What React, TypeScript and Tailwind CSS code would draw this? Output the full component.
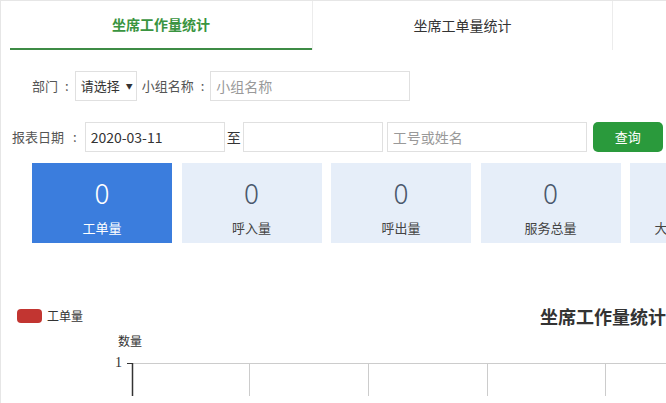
import React from 'react';

const font = { fontFamily: '"Noto Sans CJK SC", "Noto Sans", sans-serif' };

const inputCls = "h-[30px] border border-[#e0e0e0] bg-white px-[5px] text-[14px] text-[#333] outline-none placeholder:text-[#999]";

const stats = [
  { value: 0, label: '工单量', active: true },
  { value: 0, label: '呼入量' },
  { value: 0, label: '呼出量' },
  { value: 0, label: '服务总量' },
  { value: 0, label: '大厅服务工单量' },
];

export default function App() {
  return (
    <div className="relative h-[403px] w-[666px] overflow-hidden bg-white border-t border-l border-[#e6e6e6]" style={font}>
      {/* tabs */}
      <div className="flex pl-[9px] h-[49px]">
        <div className="flex w-[302px] shrink-0 items-center justify-center border-b-[2px] border-[#3d8b45] text-[14px] font-bold text-[#3a9440]">
          坐席工作量统计
        </div>
        <div className="flex w-[300px] shrink-0 items-center justify-center border-l border-[#ececec] text-[14px] text-[#333]">
          坐席工单量统计
        </div>
        <div className="w-[100px] shrink-0 border-l border-[#ececec]" />
      </div>

      {/* filters */}
      <div className="mt-[21px] flex items-center pl-[31px] text-[13px] text-[#555]">
        <span>部门</span>
        <span className="ml-[7px] mr-[6px]">:</span>
        <div className="flex h-[30px] w-[62px] items-center border border-[#e0e0e0] pl-[5px] text-[#333]">
          请选择<span className="ml-[6px] text-[7px]">▼</span>
        </div>
        <span className="ml-[5px]">小组名称</span>
        <span className="ml-[7px] mr-[6px]">:</span>
        <input className={inputCls + " w-[200px]"} placeholder="小组名称" />
      </div>

      <div className="mt-[21px] flex items-center pl-[11px] text-[13px] text-[#555]">
        <span>报表日期</span>
        <span className="ml-[9px] mr-[8px]">:</span>
        <input className={inputCls + " w-[140px]"} defaultValue="2020-03-11" />
        <span className="mx-[2px] text-[14px] text-[#333]">至</span>
        <input className={inputCls + " w-[140px]"} />
        <input className={inputCls + " ml-[4px] w-[200px]"} placeholder="工号或姓名" />
        <button className="ml-[6px] h-[30px] w-[70px] rounded-[5px] bg-[#2a9a3c] text-[13px] text-white">查询</button>
      </div>

      {/* stat cards */}
      <div className="mt-[11px] flex gap-[9.5px] pl-[31px]">
        {stats.map((s, i) => (
          <div
            key={i}
            className={
              "flex h-[80px] w-[140px] shrink-0 flex-col items-center pt-[9px] " +
              (s.active ? "bg-[#3b7ddd] text-white" : "bg-[#e6eef9] text-[#4a586c]")
            }
          >
            <div className="text-[28px] leading-[40px] font-light">{s.value}</div>
            <div className={"mt-[6px] whitespace-nowrap text-[13px] " + (s.active ? "text-white" : "text-[#444]")}>
              {s.label}
            </div>
          </div>
        ))}
      </div>

      {/* chart header */}
      <div className="mt-[58px] flex items-start">
        <div className="ml-[16px] mt-[6px] flex items-center text-[12px] text-[#333]">
          <span className="h-[14px] w-[25px] rounded-[4px] bg-[#c23531]" />
          <span className="ml-[5px]">工单量</span>
        </div>
        <div className="ml-[457px] mt-[2px] whitespace-nowrap text-[18px] font-bold text-[#333]">坐席工作量统计</div>
      </div>

      <div className="relative mt-[6px] h-[60px]">
        <span className="absolute left-[117px] top-[-4px] text-[12px] text-[#333]">数量</span>
        <span className="absolute left-[114px] top-[20px] text-[14px] leading-[14px] text-[#333]" style={{ fontFamily: '"Liberation Serif", serif' }}>1</span>
        <svg className="absolute left-0 top-0" width="666" height="60">
          <line x1="131" y1="27.5" x2="666" y2="27.5" stroke="#cccccc" strokeWidth="1" />
          <line x1="126" y1="27.5" x2="131" y2="27.5" stroke="#333" strokeWidth="1" />
          <line x1="131.5" y1="27" x2="131.5" y2="60" stroke="#333" strokeWidth="1.5" />
          {[248.5, 367.5, 486.5, 604.5].map(x => (
            <line key={x} x1={x} y1="27.5" x2={x} y2="60" stroke="#cccccc" strokeWidth="1" />
          ))}
        </svg>
      </div>
    </div>
  );
}
